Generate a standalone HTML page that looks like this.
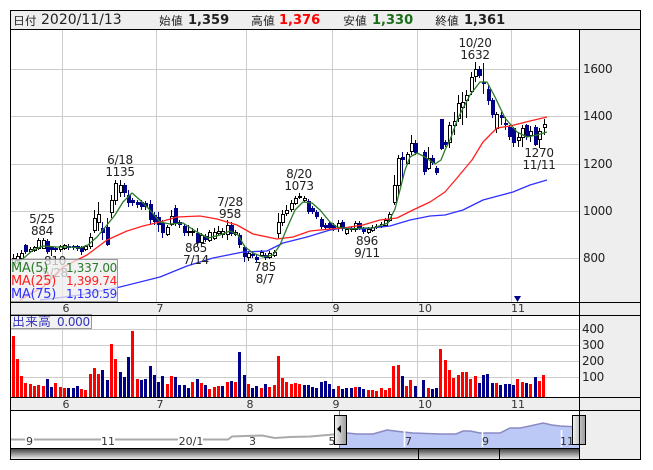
<!DOCTYPE html>
<html><head><meta charset="utf-8"><style>
html,body{margin:0;padding:0;background:#fff;width:653px;height:470px;overflow:hidden}
text{font-family:"DejaVu Sans","IPAGothic",sans-serif;font-size:12px;fill:#222;letter-spacing:-.3px}
.j{font-family:"IPAGothic","Noto Sans CJK JP",sans-serif;letter-spacing:0}
.b{font-weight:bold;font-size:13px;letter-spacing:0}
.t{text-anchor:middle}
.s{font-size:11px;fill:#333;text-anchor:middle;letter-spacing:0}
.n{font-size:11px;fill:#333;text-anchor:middle;letter-spacing:0}
</style></head><body>
<svg width="653" height="470" viewBox="0 0 653 470" xmlns="http://www.w3.org/2000/svg">
<defs>
<linearGradient id="g" x1="0" y1="0" x2="0" y2="1"><stop offset="0" stop-color="#444"/><stop offset="1" stop-color="#eee"/></linearGradient>
<linearGradient id="h" x1="0" y1="0" x2="1" y2="0"><stop offset="0" stop-color="#f4f4f4"/><stop offset="1" stop-color="#999"/></linearGradient>
</defs>
<rect x="10.500" y="10.500" width="630" height="449" fill="#fff"/>
<rect x="11" y="11" width="629" height="18" fill="#eee"/>
<rect x="580" y="29" width="60" height="430" fill="#eee"/>
<rect x="11" y="303" width="629" height="12" fill="#eee"/>
<rect x="11" y="398" width="629" height="12" fill="#eee"/>
<!-- grid -->
<path d="M62.500 29V302M156.500 29V302M246.500 29V302M332.500 29V302M417.500 29V302M511.500 29V302M11 69.500H579M11 116.500H579M11 164.500H579M11 211.500H579M11 258.500H579M62.500 315V397M156.500 315V397M246.500 315V397M332.500 315V397M417.500 315V397M511.500 315V397M11 329.500H579M11 345.500H579M11 361.500H579M11 377.500H579" stroke="#ccc" fill="none"/>
<!-- under-legend labels -->
<text class="t" x="55" y="265" fill="#222">810</text><text class="t" x="55" y="277">5/28</text>
<!-- wicks -->
<path stroke="#000" fill="none" d="M13.500 254V264M17.500 253V262M21.500 250V260M30.500 247V253M34.500 246V252M38.500 238V250M43.500 238V249M60.500 245V252M64.500 244V250M68.500 244V248M85.500 245V251M90.500 233V249M94.500 210V233M98.500 202V231M111.500 195V218M115.500 180V205M120.500 180V197M167.500 225V236M171.500 210V226M188.500 225V236M192.500 228V236M201.500 233V245M209.500 230V242M214.500 228V240M218.500 226V236M222.500 228V238M227.500 220V240M235.500 230V236M248.500 251V261M261.500 250V257M269.500 251V259M274.500 250V257M278.500 213V238M282.500 210V226M286.500 205V216M291.500 200V212M295.500 196V205M299.500 193V199M304.500 196V202M338.500 220V232M346.500 227V235M351.500 226V232M355.500 221V232M368.500 227V234M372.500 225V232M376.500 224V229M381.500 222V228M385.500 218V226M389.500 212V222M394.500 175V205M398.500 155V195M407.500 152V165M411.500 135V155M428.500 147V170M449.500 122V148M454.500 112V135M458.500 95V122M462.500 92V125M466.500 90V118M471.500 72V95M475.500 62V82M496.500 112V133M518.500 132V147M522.500 125V147M530.500 126V142M539.500 128V148M544.500 119V135"/>
<path stroke="#00008b" fill="none" d="M25.500 244V254M47.500 239V254M51.500 246V256M55.500 247V252M68.500 245V250M73.500 245V250M77.500 245V251M81.500 246V255M102.500 222V240M107.500 218V246M124.500 183V197M128.500 190V207M132.500 198V206M137.500 200V208M141.500 200V210M145.500 201V210M150.500 200V225M154.500 212V225M158.500 212V232M162.500 220V238M175.500 205V226M179.500 220V228M184.500 224V236M197.500 228V246M205.500 234V242M231.500 222V236M239.500 233V248M244.500 245V262M252.500 252V258M256.500 255V262M265.500 253V260M308.500 199V214M312.500 206V214M316.500 210V219M321.500 217V229M325.500 223V230M329.500 221V230M333.500 223V231M342.500 220V231M359.500 221V230M363.500 227V234M402.500 152V180M415.500 140V155M424.500 150V175M432.500 155V165M436.500 166V175M441.500 119V150M445.500 140V147M479.500 66V78M483.500 63V94M488.500 85V105M492.500 98V118M501.500 112V125M505.500 117V130M509.500 125V140M513.500 127V147M526.500 124V140M535.500 125V146"/>
<!-- blue bodies -->
<path fill="#00008b" d="M24 245h4v7h-4zM46 241h4v11h-4zM50 247h4v3h-4zM54 248h4v2h-4zM67 246h4v2h-4zM72 246h4v2h-4zM76 246h4v3h-4zM80 247h4v5h-4zM101 228h4v5h-4zM106 227h4v18h-4zM123 185h4v8h-4zM127 195h4v8h-4zM131 200h4v3h-4zM136 202h4v3h-4zM140 202h4v5h-4zM144 203h4v4h-4zM149 204h4v16h-4zM153 215h4v7h-4zM157 217h4v8h-4zM161 223h4v10h-4zM174 208h4v15h-4zM178 222h4v3h-4zM183 226h4v7h-4zM196 233h4v10h-4zM204 236h4v4h-4zM230 225h4v9h-4zM238 235h4v10h-4zM243 247h4v10h-4zM251 254h4v2h-4zM255 257h4v3h-4zM264 255h4v3h-4zM307 201h4v11h-4zM311 208h4v4h-4zM315 212h4v5h-4zM320 219h4v8h-4zM324 225h4v3h-4zM328 223h4v5h-4zM332 225h4v4h-4zM341 222h4v7h-4zM358 223h4v5h-4zM362 229h4v3h-4zM401 157h4v3h-4zM414 143h4v10h-4zM423 152h4v20h-4zM431 158h4v5h-4zM435 168h4v5h-4zM440 119h4v30h-4zM444 142h4v3h-4zM478 69h4v7h-4zM482 82h4v2h-4zM487 89h4v12h-4zM491 100h4v15h-4zM500 115h4v3h-4zM504 123h4v2h-4zM508 127h4v10h-4zM512 128h4v15h-4zM525 125h4v12h-4zM534 127h4v18h-4z"/>
<!-- white bodies -->
<path fill="#fff" stroke="#000" d="M12.500 258.500h3v4h-3zM16.500 256.500h3v4h-3zM20.500 253.500h3v5h-3zM29.500 249.500h3v2h-3zM33.500 247.500h3v3h-3zM37.500 240.500h3v8h-3zM42.500 240.500h3v8h-3zM59.500 246.500h3v3h-3zM63.500 245.500h3v3h-3zM84.500 246.500h3v3h-3zM89.500 237.500h3v9h-3zM93.500 218.500h3v12h-3zM97.500 214.500h3v8h-3zM110.500 200.500h3v12h-3zM114.500 183.500h3v17h-3zM119.500 185.500h3v7h-3zM166.500 227.500h3v7h-3zM170.500 216.500h3v8h-3zM187.500 231.500h3v1h-3zM191.500 231.500h3v1h-3zM200.500 235.500h3v7h-3zM208.500 232.500h3v8h-3zM213.500 232.500h3v6h-3zM217.500 231.500h3v2h-3zM221.500 231.500h3v3h-3zM226.500 225.500h3v9h-3zM234.500 232.500h3v2h-3zM247.500 253.500h3v4h-3zM260.500 252.500h3v3h-3zM268.500 253.500h3v4h-3zM273.500 252.500h3v3h-3zM277.500 222.500h3v11h-3zM281.500 214.500h3v8h-3zM285.500 210.500h3v3h-3zM290.500 203.500h3v6h-3zM294.500 198.500h3v5h-3zM298.500 196.500h3v1h-3zM303.500 198.500h3v2h-3zM337.500 223.500h3v5h-3zM345.500 229.500h3v4h-3zM350.500 228.500h3v1h-3zM354.500 223.500h3v6h-3zM367.500 229.500h3v3h-3zM371.500 227.500h3v3h-3zM375.500 226.500h3v1h-3zM380.500 224.500h3v2h-3zM384.500 220.500h3v5h-3zM388.500 214.500h3v6h-3zM393.500 185.500h3v17h-3zM397.500 158.500h3v27h-3zM406.500 154.500h3v9h-3zM410.500 143.500h3v8h-3zM427.500 158.500h3v10h-3zM448.500 125.500h3v17h-3zM453.500 121.500h3v4h-3zM457.500 103.500h3v15h-3zM461.500 102.500h3v5h-3zM465.500 95.500h3v5h-3zM470.500 77.500h3v14h-3zM474.500 69.500h3v7h-3zM495.500 114.500h3v14h-3zM517.500 137.500h3v3h-3zM521.500 128.500h3v9h-3zM529.500 131.500h3v4h-3zM538.500 131.500h3v8h-3zM543.500 124.500h3v3h-3z"/>
<!-- MAs -->
<g fill="none" stroke-width="1.300" stroke-linejoin="round">
<path stroke="#3030ff" d="M40 300L80 295L120 287L160 277L187 266L213 258L243 252L267 251L283 243L307 237L330 230L343 228L363 229L390 226L410 220L430 216L445 215L463 210L483 200L513 192L530 185L547 180"/>
<path stroke="#ff2020" d="M20 300L43 287L63 267L87 255L107 240L127 231L143 226L160 222L177 217L200 216L217 219L237 225L253 234L277 239L293 237L310 231L330 229L343 228L363 225L380 220L397 218L413 210L430 202L445 192L457 178L472 160L483 142L497 128L510 126L530 121L547 117"/>
<path stroke="#2a7a2a" d="M13 266L25 257L33 250L43 246L57 247L70 247L80 248L88 245L97 237L107 225L115 215L123 202L132 193L140 200L150 210L160 222L170 224L183 223L197 232L208 238L220 235L230 231L238 235L245 247L253 253L263 257L273 255L280 245L287 228L295 210L303 202L312 203L320 210L330 222L337 227L350 229L363 228L373 228L388 223L395 209L400 190L405 170L410 157L417 153L425 157L435 164L441 160L445 150L450 140L458 118L470 95L480 82L487 82L495 97L505 118L517 132L527 137L537 135L547 132"/>
</g>
<!-- annotations -->
<text class="t" x="42" y="223">5/25</text><text class="t" x="42" y="235">884</text>
<text class="t" x="120" y="164">6/18</text><text class="t" x="120" y="176">1135</text>
<text class="t" x="230" y="206">7/28</text><text class="t" x="230" y="218">958</text>
<text class="t" x="299" y="178">8/20</text><text class="t" x="299" y="190">1073</text>
<text class="t" x="196" y="252">865</text><text class="t" x="196" y="264">7/14</text>
<text class="t" x="265" y="271">785</text><text class="t" x="265" y="283">8/7</text>
<text class="t" x="367" y="245">896</text><text class="t" x="367" y="257">9/11</text>
<text class="t" x="475" y="47">10/20</text><text class="t" x="475" y="59">1632</text>
<text class="t" x="539" y="157">1270</text><text class="t" x="539" y="169">11/11</text>
<path d="M514 296h7l-3.500 6z" fill="#00008b"/>
<!-- legend -->
<rect x="10.500" y="259.500" width="107" height="42" fill="#eee" fill-opacity=".75" stroke="#999"/>
<text x="11" y="272" style="fill:#2a7a2a;font-size:13px">MA(5)</text><text x="117" y="272" text-anchor="end" style="fill:#2a7a2a">1,337.00</text>
<text x="11" y="285" style="fill:#ff2020;font-size:13px">MA(25)</text><text x="117" y="285" text-anchor="end" style="fill:#ff2020">1,399.74</text>
<text x="11" y="298" style="fill:#3030ff;font-size:13px">MA(75)</text><text x="117" y="298" text-anchor="end" style="fill:#3030ff">1,130.59</text>
<!-- volume -->
<path fill="none" stroke="#ff0000" stroke-width="3" d="M13.500 397V336M17.500 397V359M21.500 397V376M25.500 397V383M30.500 397V384M34.500 397V386M38.500 397V385M43.500 397V386M55.500 397V383M60.500 397V387M64.500 397V388M81.500 397V389M85.500 397V390M90.500 397V374M94.500 397V368M98.500 397V374M111.500 397V344M115.500 397V359M132.500 397V331M137.500 397V379M167.500 397V384M171.500 397V376M192.500 397V382M201.500 397V383M209.500 397V389M214.500 397V387M218.500 397V386M227.500 397V382M235.500 397V382M248.500 397V384M261.500 397V388M269.500 397V387M274.500 397V385M278.500 397V356M282.500 397V378M286.500 397V382M291.500 397V384M295.500 397V383M299.500 397V384M338.500 397V386M355.500 397V387M368.500 397V390M372.500 397V390M376.500 397V391M381.500 397V388M385.500 397V390M389.500 397V388M393.500 397V366M398.500 397V365M406.500 397V386M410.500 397V380M428.500 397V388M440.500 397V349M445.500 397V360M449.500 397V370M453.500 397V378M458.500 397V375M462.500 397V372M466.500 397V372M470.500 397V379M475.500 397V376M496.500 397V383M517.500 397V379M522.500 397V382M530.500 397V384M539.500 397V381M543.500 397V375"/>
<path fill="none" stroke="#00008b" stroke-width="3" d="M47.500 397V379M51.500 397V387M68.500 397V388M73.500 397V388M77.500 397V386M102.500 397V370M107.500 397V380M120.500 397V372M124.500 397V377M128.500 397V357M141.500 397V380M145.500 397V379M150.500 397V366M154.500 397V375M158.500 397V382M162.500 397V376M175.500 397V377M179.500 397V385M184.500 397V385M188.500 397V388M197.500 397V379M205.500 397V385M222.500 397V386M231.500 397V381M239.500 397V352M244.500 397V375M252.500 397V388M256.500 397V386M265.500 397V384M304.500 397V385M308.500 397V385M312.500 397V387M316.500 397V388M321.500 397V382M325.500 397V381M329.500 397V384M333.500 397V389M342.500 397V389M346.500 397V388M351.500 397V388M359.500 397V387M363.500 397V389M402.500 397V376M415.500 397V386M423.500 397V380M432.500 397V389M436.500 397V388M479.500 397V383M483.500 397V375M487.500 397V374M492.500 397V383M500.500 397V385M505.500 397V384M509.500 397V384M513.500 397V385M526.500 397V383M535.500 397V377"/>
<rect x="10.500" y="314.500" width="81" height="14" fill="#eee" fill-opacity=".75" stroke="#999"/>
<text x="12" y="326" class="j" style="fill:#3333bb;font-size:13px">出来高</text>
<text x="57" y="326" style="fill:#3333bb">0.000</text>
<!-- navigator -->
<path d="M339 448V434L347 433L357 434L373 434L380 432L387 430L403 432L413 433L440 434L456 434L463 431L470 431L480 433L490 433L500 433L510 428L520 428L530 426L543 423L552 425L560 426L579 427V448Z" fill="#bcc8f5"/>
<path d="M339 434L347 433L357 434L373 434L380 432L387 430L403 432L413 433L440 434L456 434L463 431L470 431L480 433L490 433L500 433L510 428L520 428L530 426L543 423L552 425L560 426L579 427" fill="none" stroke="#8a8ac4" stroke-width="1.500"/>
<path d="M11 439.500H228L232 436.500L245 436L262 435.500L275 438L290 437L310 436.500L339 434" fill="none" stroke="#aaa" stroke-width="2"/>
<path d="M404.500 430V447M482.500 430V447M561.500 430V447" stroke="#fff" stroke-width="1.500"/>
<path d="M339.500 410V448M579.500 410V415" stroke="#2a8fc0"/>
<rect x="25" y="437" width="9" height="10" fill="#fff"/><rect x="101" y="437" width="14" height="10" fill="#fff"/><rect x="178" y="437" width="25" height="10" fill="#fff"/><rect x="248" y="437" width="9" height="10" fill="#fff"/>
<text class="n" x="29.500" y="445">9</text><text class="n" x="108" y="445">11</text><text class="n" x="191" y="445">20/1</text><text class="n" x="252.500" y="445">3</text><text class="n" x="332" y="445">5</text><text class="n" x="408.500" y="445">7</text><text class="n" x="485.500" y="445">9</text><text class="n" x="567" y="445">11</text>
<rect x="334.500" y="415.500" width="12" height="29" fill="url(#h)" stroke="#000"/>
<path d="M337 429L341 425V433Z" fill="#000"/>
<rect x="572.500" y="415.500" width="13" height="29" fill="url(#h)" stroke="#000"/>
<rect x="11" y="449" width="568" height="10" fill="url(#g)"/>
<path d="M418.500 448V459M499.500 448V459" stroke="#000"/>
<!-- frame lines -->
<path d="M10.500 10.500H640.500V459.500H10.500ZM10.500 29.500H640.500M579.500 29.500V459.500M10.500 302.500H640.500M10.500 315.500H640.500M10.500 397.500H640.500M10.500 410.500H640.500M10.500 448.500H579.500" fill="none" stroke="#000"/>
<!-- header -->
<text x="13" y="25" class="j">日付</text><text x="41" y="24" style="font-size:14px;letter-spacing:0">2020/11/13</text>
<text x="159" y="25" class="j">始値</text><text x="188" y="24" class="b">1,359</text>
<text x="251" y="25" class="j">高値</text><text x="279" y="24" class="b" style="fill:#ff0000">1,376</text>
<text x="343" y="25" class="j">安値</text><text x="372" y="24" class="b" style="fill:#1a6e1a">1,330</text>
<text x="435" y="25" class="j">終値</text><text x="464" y="24" class="b">1,361</text>
<!-- axes -->
<g style="letter-spacing:-.6px">
<text x="583" y="73">1600</text><text x="583" y="120">1400</text><text x="583" y="168">1200</text><text x="583" y="215">1000</text><text x="583" y="262">800</text>
<text x="582" y="333">400</text><text x="582" y="349">300</text><text x="582" y="365">200</text><text x="582" y="381">100</text>
</g>
<text class="s" x="66" y="312">6</text><text class="s" x="160" y="312">7</text><text class="s" x="250" y="312">8</text><text class="s" x="336" y="312">9</text><text class="s" x="425" y="312">10</text><text class="s" x="518" y="312">11</text>
<text class="s" x="66" y="408">6</text><text class="s" x="160" y="408">7</text><text class="s" x="250" y="408">8</text><text class="s" x="336" y="408">9</text><text class="s" x="425" y="408">10</text><text class="s" x="518" y="408">11</text>
</svg>
</body></html>
